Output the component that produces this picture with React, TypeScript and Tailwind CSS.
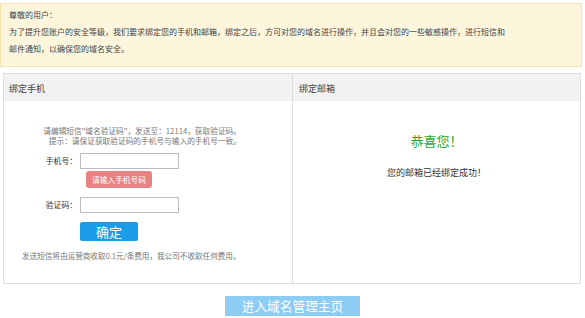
export default function App() {
  return (
    <div className="h-[318px] w-[585px] bg-white font-['Noto_Sans_CJK_SC',sans-serif] text-[#333]">
      {/* notice */}
      <div className="mt-[3px] h-[64px] w-[582px] border border-[#f3e1b0] bg-[#fdf5dc] pl-[8px] pt-[2px] text-[8px] leading-[17px] text-[#444]">
        <p>尊敬的用户：</p>
        <p>
          为了提升您账户的安全等级，我们要求绑定您的手机和邮箱，绑定之后，方可对您的域名进行操作，并且会对您的一些敏感操作，进行短信和
          <br />
          邮件通知，以确保您的域名安全。
        </p>
      </div>

      {/* bind panel */}
      <div className="ml-[3px] mt-[6px] flex h-[211px] w-[578px] border border-[#dcdcdc]">
        <section className="w-[289px] border-r border-[#dcdcdc]">
          <h2 className="h-[27px] bg-[#f2f2f2] px-[5px] text-[9px] leading-[30px] text-[#444]">绑定手机</h2>
          <div className="pt-[25px]">
            <div className="w-[237px] text-right text-[7.7px] leading-[10px] text-[#777]">
              <p>请编辑短信"域名验证码"，发送至：12114，获取验证码。</p>
              <p>提示：请保证获取验证码的手机号与输入的手机号一致。</p>
            </div>
            <div className="mt-[7px] flex items-center">
              <span className="w-[73px] text-right text-[7.8px]">手机号：</span>
              <input className="ml-[3px] h-[16px] w-[99px] border border-[#bdbdbd] bg-white" />
            </div>
            <div className="ml-[82px] mt-[2px] flex h-[17px] w-[66px] items-center justify-center rounded-[3px] bg-[#e88283] text-[7.7px] text-white">
              请输入手机号码
            </div>
            <div className="mt-[9px] flex items-center">
              <span className="w-[73px] text-right text-[7.8px]">验证码：</span>
              <input className="ml-[3px] h-[16px] w-[99px] border border-[#bdbdbd] bg-white" />
            </div>
            <button
              type="button"
              className="ml-[76px] mt-[9px] flex h-[19px] w-[58px] items-center justify-center rounded-[2px] bg-[#1c9be6] text-[13px] leading-none text-white"
            >
              确定
            </button>
            <p className="mt-[10px] pl-[18px] text-[7.6px] leading-[10px] text-[#777]">
              发送短信将由运营商收取0.1元/条费用，我公司不收取任何费用。
            </p>
          </div>
        </section>

        <section className="flex-1">
          <h2 className="h-[27px] bg-[#f2f2f2] px-[6px] text-[9px] leading-[30px] text-[#444]">绑定邮箱</h2>
          <div className="flex flex-col items-center pt-[32px]">
            <p className="text-[13px] leading-[16px] text-[#2aa52a]">恭喜您！</p>
            <p className="mt-[18px] text-[9px] leading-[12px] text-[#333]">您的邮箱已经绑定成功！</p>
          </div>
        </section>
      </div>

      <div className="mt-[12px] flex justify-center">
        <button
          type="button"
          className="h-[20px] w-[135px] bg-[#8ecdf3] text-[12.7px] leading-[20px] text-white"
        >
          进入域名管理主页
        </button>
      </div>
    </div>
  )
}
